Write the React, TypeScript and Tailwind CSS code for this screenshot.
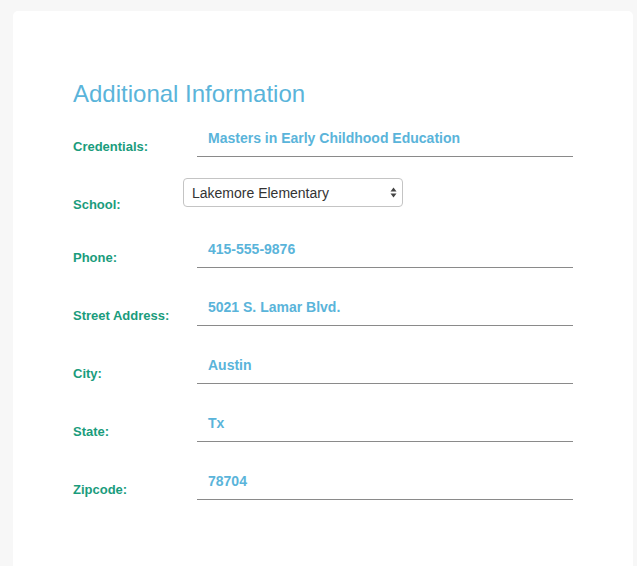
import { ChangeEvent, useState } from 'react';

const fields = [
  { label: 'Phone:', value: '415-555-9876' },
  { label: 'Street Address:', value: '5021 S. Lamar Blvd.' },
  { label: 'City:', value: 'Austin' },
  { label: 'State:', value: 'Tx' },
  { label: 'Zipcode:', value: '78704' },
];

function TextRow({ label, value, className = '' }: { label: string; value: string; className?: string }) {
  return (
    <div className={`flex items-end ${className}`}>
      <label className="w-[124px] pb-[3px] text-[13px] leading-[15px] font-bold text-[#1a9c7c]">{label}</label>
      <div className="flex h-[37px] w-[376px] items-center border-b border-[#8a8a8a] pl-[11px] text-[14px] leading-[16px] font-bold text-[#5ab4da]">
        {value}
      </div>
    </div>
  );
}

export default function App() {
  const [school, setSchool] = useState('Lakemore Elementary');

  return (
    <div className="h-[566px] overflow-hidden bg-[#f7f7f7] pt-[11px] pl-[13px] font-['Liberation_Sans',Arial,sans-serif]">
      <div className="h-[620px] w-[620px] rounded-[5px] bg-white pt-[69px] pl-[60px]">
        <h2 className="text-[24px] leading-[28px] font-normal text-[#5ab4da]">Additional Information</h2>

        <TextRow label="Credentials:" value="Masters in Early Childhood Education" className="mt-[12px]" />

        <div className="mt-[21px] flex items-start">
          <label className="mt-[19px] w-[110px] text-[13px] leading-[15px] font-bold text-[#1a9c7c]">School:</label>
          <div className="relative w-[220px]">
            <select
              value={school}
              onChange={(e: ChangeEvent<HTMLSelectElement>) => setSchool(e.target.value)}
              className="h-[29px] w-full appearance-none rounded-[4px] border border-[#c4c4c4] bg-white pl-[8px] text-[14px] leading-[16px] text-[#333]"
            >
              <option>Lakemore Elementary</option>
              <option>Zilker Elementary</option>
              <option>Becker Elementary</option>
            </select>
            <svg
              className="pointer-events-none absolute top-[9px] right-[6px]"
              width="7"
              height="11"
              viewBox="0 0 7 11"
            >
              <path d="M3.5 0.5 L6.5 4.5 H0.5 Z" fill="#444" />
              <path d="M3.5 10.5 L6.5 6.5 H0.5 Z" fill="#444" />
            </svg>
          </div>
        </div>

        {fields.map((f, i) => (
          <TextRow key={f.label} label={f.label} value={f.value} className={i === 0 ? 'mt-[19px]' : 'mt-[21px]'} />
        ))}
      </div>
    </div>
  );
}
